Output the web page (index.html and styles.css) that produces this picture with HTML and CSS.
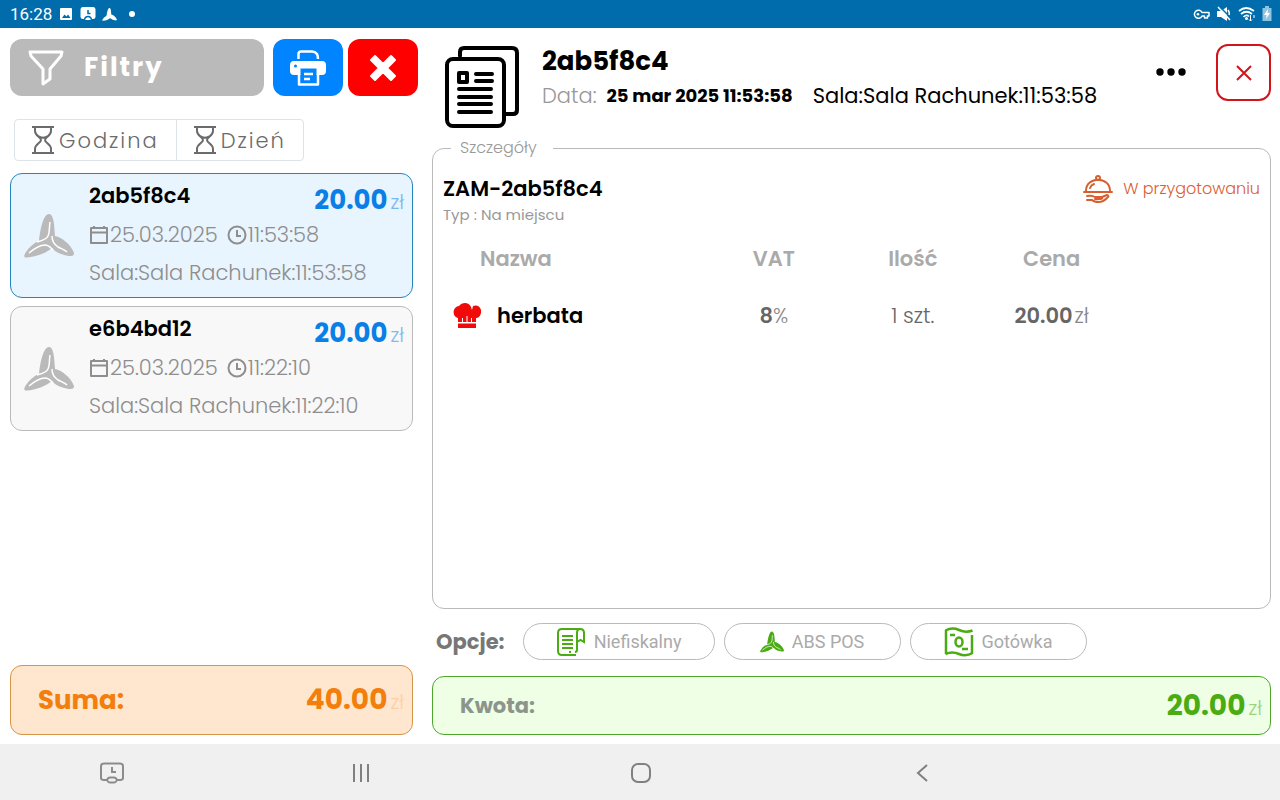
FILE: index.html
```html
<!DOCTYPE html>
<html lang="pl">
    <head>
        <meta charset="utf-8">
        <meta name="viewport" content="width=device-width, initial-scale=1">
        <title>Rachunki</title>
        <link rel="stylesheet" href="styles.css">
    </head>
    <body>
        <!-- shared icons -->
        <svg class="sprite" aria-hidden="true">
            <symbol id="logo" viewBox="0 0 50 44">
                <path d="M25 0C28 0 29.500 5 30 10L31 22C38 23 47 31 50 39C50 42 48 42 45 42C39 41 32 39 28 34C22 39 12 43 3 43.500C-1 43.500 0 41 2 38C5 33 10 29 15 27C16 17 19 0 25 0Z"/>
                <path class="vein" d="M26 8C25 14 26 18 24 22C22 26 17 27 13 28M28 22C28 28 31 31 34 33C38 35 41 36 43 38M5 39C11 34 16 31 21 31C25 31 26 33 29 36"/>
            </symbol>
            <symbol id="calendar" viewBox="0 0 20 20">
                <path d="M2 3H18V18H2ZM2 7.500H18M5 1V3M15 1V3" fill="none" stroke="currentColor" stroke-width="2" stroke-linejoin="round"/>
            </symbol>
            <symbol id="clock" viewBox="0 0 20 20">
                <circle cx="10" cy="10" r="8.500" fill="none" stroke="currentColor" stroke-width="2"/>
                <path d="M10 5V11H14" fill="none" stroke="currentColor" stroke-width="2"/>
            </symbol>
            <symbol id="hourglass" viewBox="0 0 22 28">
                <path d="M0 1H22M0 27H22M3 1V5C3 10 9 11 9 14C9 17 3 18 3 23V27M19 1V5C19 10 13 11 13 14C13 17 19 18 19 23V27M6 10C9 12 13 12 16 10" fill="none" stroke="currentColor" stroke-width="2"/>
            </symbol>
        </svg>

        <header class="status-bar">
            <div class="status-group">
                <span class="status-time">16:28</span>
                <svg width="16" height="14" viewBox="0 0 16 14"><path fill="#fff" d="M3 1H13Q14 1 14 2V12Q14 13 13 13H3Q2 13 2 12V2Q2 1 3 1Z"/><path fill="#006cab" d="M4 11L6.500 7.500L8.500 9.500L10 7.500L12.500 11Z"/></svg>
                <svg width="16" height="14" viewBox="0 0 16 14"><path fill="#fff" d="M3 0H13Q15.500 0 15.500 3V10Q15.500 12 13 12H12V13H4V12H3Q.500 12 .500 10V3Q.500 0 3 0Z"/><path d="M8 3V6.500H10.500M4.500 13Q5 9.500 8 9.500T11.500 13" fill="none" stroke="#006cab" stroke-width="1.500"/></svg>
                <svg class="logo-status" width="15" height="13"><use href="#logo"/></svg>
                <svg width="14" height="14" viewBox="0 0 14 14"><circle cx="9" cy="7" r="3" fill="#fff"/></svg>
            </div>
            <div class="status-group">
                <svg width="17" height="14" viewBox="0 0 17 14"><path d="M9 5.500H16V9H14.500V11H11.500V9H9A4 4 0 1 1 9 5.500Z" fill="none" stroke="#fff" stroke-width="1.500" stroke-linejoin="round"/><circle cx="5" cy="7.300" r="1.300" fill="#fff"/></svg>
                <svg width="16" height="16" viewBox="0 0 16 16"><path d="M1 5H5L11 1V15L5 11H1Z" fill="#fff"/><path d="M4 1L15 12" stroke="#006cab" stroke-width="1.500"/><path d="M2 1L14 14M12 4Q14 7 13 9" stroke="#fff" stroke-width="1.500" fill="none"/></svg>
                <svg width="18" height="16" viewBox="0 0 18 16"><path d="M1 5Q8 -1 16 5M3 8Q8.500 3.500 14 8M5.500 11Q8.500 8 11 10.500" fill="none" stroke="#fff" stroke-width="1.700"/><circle cx="8.500" cy="12.500" r="1.500" fill="#fff"/><path d="M12.500 9V15M11 13.500L12.500 15L14 13.500M16 12V9" stroke="#fff" fill="none"/></svg>
                <svg width="10" height="16" viewBox="0 0 10 16"><path d="M3 0H7V2H9.500V15H.500V2H3Z" fill="#8fc3e0"/><path d="M6 3L2 9H4.500L4 13L8 7H5.500Z" fill="#fff"/></svg>
            </div>
        </header>

        <main class="app">
            <aside class="orders">
                <div class="toolbar">
                    <button class="btn btn-filter">
                        <svg width="36" height="36" viewBox="0 0 36 36"><path d="M2 2H34L33 6L22 19V29L15 34V19L3 6Z" fill="none" stroke="#fff" stroke-width="3" stroke-linejoin="round"/></svg>
                        Filtry
                    </button>
                    <button class="btn btn-print" aria-label="Drukuj">
                        <svg width="36" height="36" viewBox="0 0 36 36">
                            <path d="M8.500 9V4Q8.500 1.500 11 1.500H22Q25 1.500 27 4Q28 6 28 9" fill="none" stroke="#fff" stroke-width="2.500"/>
                            <path d="M4 11H32Q36 11 36 15V21Q36 25 32 25H4Q0 25 0 21V15Q0 11 4 11Z" fill="#fff"/>
                            <circle cx="5.500" cy="16" r="1.500" fill="#0084ff"/>
                            <path d="M10.500 18.500H26.500V34.500H10.500Z" fill="#0084ff"/>
                            <path d="M9 24V34.500H28V24M14 24H23M14 29H20" fill="none" stroke="#fff" stroke-width="2.500" stroke-linejoin="round"/>
                        </svg>
                    </button>
                    <button class="btn btn-clear" aria-label="Wyczyść">
                        <svg width="28" height="28" viewBox="0 0 28 28"><path d="M6 2L14 10L22 2L26 6L18 14L26 22L22 26L14 18L6 26L2 22L10 14L2 6Z" fill="#fff" stroke="#fff" stroke-width="2" stroke-linejoin="round"/></svg>
                    </button>
                </div>

                <div class="segment">
                    <button class="segment-item"><svg width="22" height="28"><use href="#hourglass"/></svg>Godzina</button>
                    <button class="segment-item"><svg width="22" height="28"><use href="#hourglass"/></svg>Dzień</button>
                </div>

                <div class="order-list">
                    <article class="order order-active">
                        <svg class="order-logo" width="50" height="44"><use href="#logo"/></svg>
                        <div class="order-info">
                            <div class="order-top">
                                <h3>2ab5f8c4</h3>
                                <div class="price">20.00<span>zł</span></div>
                            </div>
                            <div class="order-date">
                                <svg width="20" height="20"><use href="#calendar"/></svg><span>25.03.2025</span>
                                <svg class="clock" width="20" height="20"><use href="#clock"/></svg><span>11:53:58</span>
                            </div>
                            <p>Sala:Sala Rachunek:11:53:58</p>
                        </div>
                    </article>
                    <article class="order">
                        <svg class="order-logo" width="50" height="44"><use href="#logo"/></svg>
                        <div class="order-info">
                            <div class="order-top">
                                <h3>e6b4bd12</h3>
                                <div class="price">20.00<span>zł</span></div>
                            </div>
                            <div class="order-date">
                                <svg width="20" height="20"><use href="#calendar"/></svg><span>25.03.2025</span>
                                <svg class="clock" width="20" height="20"><use href="#clock"/></svg><span>11:22:10</span>
                            </div>
                            <p>Sala:Sala Rachunek:11:22:10</p>
                        </div>
                    </article>
                </div>

                <div class="sum">
                    <span class="sum-label">Suma:</span>
                    <div class="price">40.00<span>zł</span></div>
                </div>
            </aside>

            <section class="details">
                <div class="details-head">
                    <svg width="76" height="84" viewBox="0 0 76 84">
                        <g fill="none" stroke="#000" stroke-width="4" stroke-linecap="round" stroke-linejoin="round">
                            <path d="M16 12V8Q16 4 20 4H68Q73 4 73 9V66Q73 70 69 70H61"/>
                            <rect x="3" y="15" width="57" height="67" rx="6"/>
                            <path d="M32 30H48M32 37H48M15 45H47M15 53H47M15 60H47M15 68H47"/>
                            <path d="M15 29H23V38H15Z"/>
                        </g>
                    </svg>
                    <div class="details-title">
                        <h1>2ab5f8c4</h1>
                        <div class="details-meta">
                            <span class="meta-label">Data:</span>
                            <strong>25 mar 2025 11:53:58</strong>
                            <span class="meta-place">Sala:Sala Rachunek:11:53:58</span>
                        </div>
                    </div>
                    <button class="more" aria-label="Więcej">
                        <svg width="30" height="8" viewBox="0 0 30 8"><circle cx="4" cy="4" r="3.700"/><circle cx="15" cy="4" r="3.700"/><circle cx="26" cy="4" r="3.700"/></svg>
                    </button>
                    <button class="close" aria-label="Zamknij">
                        <svg width="16" height="16" viewBox="0 0 16 16"><path d="M1 1L15 15M15 1L1 15" stroke="#d3141b" stroke-width="2"/></svg>
                    </button>
                </div>

                <fieldset class="box">
                    <legend>Szczegóły</legend>
                    <div class="box-head">
                        <div>
                            <h2>ZAM-2ab5f8c4</h2>
                            <p>Typ : Na miejscu</p>
                        </div>
                        <div class="state">
                            <svg width="30" height="28" viewBox="0 0 30 28">
                                <g fill="none" stroke="#d8602f" stroke-width="2" stroke-linecap="round" stroke-linejoin="round">
                                    <circle cx="15" cy="3" r="2"/>
                                    <path d="M3 16C3 1 27 1 27 16M1 17H29M7 13Q8 10 11 9M4 21Q9 20 12 22H19Q20 24 17 24H12M19 22L24 20Q27 21 24 23Q20 27 16 27Q11 27 9 25H4"/>
                                </g>
                            </svg>
                            <span>W przygotowaniu</span>
                        </div>
                    </div>

                    <table>
                        <thead>
                            <tr>
                                <th class="col-name">Nazwa</th>
                                <th>VAT</th>
                                <th>Ilość</th>
                                <th>Cena</th>
                                <td></td>
                            </tr>
                        </thead>
                        <tbody>
                            <tr>
                                <td>
                                    <div class="item-name">
                                        <svg width="28" height="26" viewBox="0 0 28 26"><path d="M5 19V15C-1 14-1 4 6 3C9-1 16-1 18 4L19 7L20 3C25 1 29 5 28 10C27 14 25 15 23 15V19H19V15H18V19H14.500V13H13.500V19H10V15H9V19ZM5 20.500H23V25H5Z" fill="#f00a0a"/></svg>
                                        herbata
                                    </div>
                                </td>
                                <td><b>8</b><span class="unit">%</span></td>
                                <td>1 szt.</td>
                                <td><b>20.00</b><span class="unit unit-zl">zł</span></td>
                                <td></td>
                            </tr>
                        </tbody>
                    </table>
                </fieldset>

                <div class="options">
                    <span class="options-label">Opcje:</span>
                    <button class="option option-wide">
                        <svg width="30" height="30" viewBox="0 0 30 30"><path d="M24 2H6Q2 2 2 6V24Q2 28 6 28H20M24 2Q21 2 21 6V23Q21 25 19 25M24 2Q28 2 28 6V15L24.500 13L21 15M6 9H17M6 13H17M6 17H17M6 21H17M13 25H15" fill="none" stroke="#4aab12" stroke-width="2"/></svg>
                        Niefiskalny
                    </button>
                    <button class="option">
                        <svg class="logo-green" width="24" height="22"><use href="#logo"/></svg>
                        ABS POS
                    </button>
                    <button class="option">
                        <svg width="30" height="30" viewBox="0 0 30 30"><path d="M1.500 3.500Q8 0 15 3T28.500 3.500M1.500 27Q8 24 15 27T28.500 26M2 3V27M28 8V27M6 8H11M18 22H24" fill="none" stroke="#4aab12" stroke-width="2.500"/><ellipse cx="15" cy="15" rx="3.500" ry="4.500" fill="none" stroke="#4aab12" stroke-width="2.500"/></svg>
                        Gotówka
                    </button>
                </div>

                <div class="amount">
                    <span class="amount-label">Kwota:</span>
                    <div class="price">20.00<span>zł</span></div>
                </div>
            </section>
        </main>

        <nav class="nav-bar">
            <button aria-label="Zrzut ekranu"><svg width="24" height="22" viewBox="0 0 24 22"><path d="M7 18H4Q1 18 1 16V4Q1 1.500 4 1.500H20Q23 1.500 23 4V16Q23 18 20 18H17M12 5V10H16M7 18Q8 15.500 10 15.500H14Q16 15.500 17 18Q16 20.500 14 20.500H10Q8 20.500 7 18Z" fill="none" stroke="#8c8c8c" stroke-width="2"/></svg></button>
            <button aria-label="Ostatnie"><svg width="18" height="18" viewBox="0 0 18 18"><path d="M2 0V18M9 0V18M16 0V18" stroke="#808080" stroke-width="2"/></svg></button>
            <button aria-label="Ekran główny"><svg width="20" height="20" viewBox="0 0 20 20"><rect x="1" y="1" width="18" height="18" rx="6" fill="none" stroke="#808080" stroke-width="2"/></svg></button>
            <button aria-label="Wstecz"><svg width="12" height="18" viewBox="0 0 12 18"><path d="M11 1L2 9L11 17" fill="none" stroke="#808080" stroke-width="2"/></svg></button>
        </nav>
    </body>
</html>
```
FILE: styles.css
```css
* {
    box-sizing: border-box;
}
body {
    margin: 0;
    min-height: 100vh;
    display: flex;
    flex-direction: column;
    background: #fff;
    font-family: Poppins, Inter, sans-serif;
    color: #000;
}
h1, h2, h3, p {
    margin: 0;
}
button {
    font-family: inherit;
    background: none;
    border: 0;
    padding: 0;
    cursor: pointer;
}
svg {
    display: block;
    flex-shrink: 0;
}
.sprite {
    display: none;
}
.vein {
    fill: none;
    stroke: #fff;
    stroke-width: 1.5;
}

/* android bars */
.status-bar {
    height: 28px;
    padding: 0 8px 0 10px;
    display: flex;
    align-items: center;
    justify-content: space-between;
    background: #006cab;
    color: #fff;
}
.status-group {
    display: flex;
    align-items: center;
    gap: 6px;
}
.status-time {
    font: 17px Roboto, sans-serif;
}
.logo-status {
    fill: #fff;
}
.nav-bar {
    height: 56px;
    display: grid;
    grid-template-columns: 17% 22% 22% 22%;
    place-items: center;
    padding: 2px 0 0 3px;
    background: #f0f0f0;
}

.app {
    flex: 1;
    display: grid;
    grid-template-columns: 408px 1fr;
    gap: 14px;
    padding: 0 9px 9px 10px;
}

/* left side */
.orders {
    display: flex;
    flex-direction: column;
    padding-top: 11px;
}
.toolbar {
    display: flex;
    gap: 5px;
}
.btn {
    width: 70px;
    height: 57px;
    border-radius: 12px;
    display: flex;
    align-items: center;
    justify-content: center;
}
.btn-filter {
    flex: 1;
    justify-content: flex-start;
    gap: 20px;
    padding-left: 18px;
    margin-right: 4px;
    background: #bababa;
    color: #fff;
    font-size: 26px;
    font-weight: 700;
    letter-spacing: 2px;
}
.btn-print {
    background: #0084ff;
}
.btn-clear {
    background: #f00;
}
.segment {
    align-self: flex-start;
    display: flex;
    margin: 23px 0 12px 4px;
    border: 1px solid #dde3e6;
    border-radius: 4px;
}
.segment-item {
    height: 40px;
    padding: 0 17px;
    display: flex;
    align-items: center;
    gap: 5px;
    color: #6b6b6b;
    font-size: 21px;
    font-weight: 300;
    letter-spacing: 2px;
}
.segment-item + .segment-item {
    border-left: 1px solid #dde3e6;
}
.order-list {
    flex: 1;
    display: flex;
    flex-direction: column;
    gap: 8px;
    margin-right: 5px;
}
.order {
    display: flex;
    align-items: center;
    gap: 15px;
    height: 125px;
    padding: 0 8px 0 13px;
    background: #f8f8f8;
    border: 1px solid #bababa;
    border-radius: 12px;
    color: #8e8e8e;
}
.order-active {
    background: #e8f4fe;
    border-color: #2585bd;
}
.order-logo {
    fill: #bababa;
}
.order-info {
    flex: 1;
    font-size: 21px;
    font-weight: 300;
}
.order-top {
    display: flex;
    justify-content: space-between;
    height: 42px;
}
.order h3 {
    color: #000;
    font-size: 21px;
    font-weight: 600;
    line-height: 38px;
}
.order .price {
    line-height: 46px;
}
.order-date {
    display: flex;
    align-items: center;
    gap: 1px;
    line-height: 32px;
}
.clock {
    margin-left: 8px;
}
.order p {
    line-height: 44px;
}
.price {
    color: #0a7fe6;
    font-size: 26px;
    font-weight: 700;
    white-space: nowrap;
}
.price span {
    margin-left: 3px;
    font-size: 20px;
    font-weight: 300;
    opacity: 0.5;
}
.sum, .amount {
    display: flex;
    align-items: center;
    justify-content: space-between;
    border: 1px solid;
    border-radius: 12px;
}
.sum {
    height: 70px;
    margin-right: 5px;
    padding: 0 8px 0 27px;
    background: #ffe6cf;
    border-color: #d69548;
}
.sum-label, .sum .price {
    color: #f27e0c;
    font-weight: 700;
}
.sum-label {
    font-size: 26px;
}
.sum .price {
    font-size: 28px;
}
.sum .price span {
    opacity: 0.2;
}

/* right side */
.details {
    display: flex;
    flex-direction: column;
    min-width: 0;
}
.details-head {
    display: flex;
    align-items: flex-start;
    height: 110px;
    padding: 16px 0 0 12px;
}
.details-title {
    flex: 1;
    padding-left: 22px;
}
h1 {
    font-size: 26px;
    line-height: 34px;
}
.details-meta {
    display: flex;
    align-items: center;
    line-height: 36px;
    font-size: 21px;
    white-space: nowrap;
}
.details-meta strong {
    font-size: 18px;
    padding: 0 20px 0 10px;
}
.meta-label {
    color: #999;
    font-weight: 300;
}
.more {
    margin: 24px 30px 0 0;
}
.close {
    width: 55px;
    height: 57px;
    display: flex;
    align-items: center;
    justify-content: center;
    border: 2px solid #d3141b;
    border-radius: 12px;
}
.box {
    flex: 1;
    min-width: 0;
    margin: 0;
    padding: 16px 10px;
    border: 1px solid #bababa;
    border-radius: 12px;
}
.box legend {
    margin-left: 8px;
    padding: 0 16px 0 9px;
    color: #999;
    font-size: 16px;
    font-weight: 300;
    line-height: 20px;
}
.box-head {
    display: flex;
    justify-content: space-between;
    align-items: flex-start;
}
h2 {
    font-size: 21px;
    font-weight: 600;
    line-height: 30px;
}
.box-head p {
    color: #999;
    font-size: 15px;
    line-height: 22px;
}
.state {
    display: flex;
    align-items: center;
    gap: 10px;
    color: #d8602f;
    font-size: 16px;
    font-weight: 300;
    line-height: 30px;
}
table {
    width: 100%;
    margin-top: 4px;
    table-layout: fixed;
    border-collapse: collapse;
    font-size: 21px;
    text-align: center;
}
th, td {
    width: 17%;
    height: 57px;
    padding: 0;
    color: #666;
    font-weight: 300;
}
th {
    color: #aaa;
    font-weight: 600;
}
.col-name {
    width: 32%;
    padding-left: 37px;
    text-align: left;
}
.item-name {
    display: flex;
    align-items: center;
    gap: 16px;
    padding-left: 10px;
    color: #000;
    font-weight: 600;
}
td b {
    font-weight: 600;
}
.unit {
    color: #888;
}
.unit-zl {
    margin-left: 2px;
}
.options {
    display: flex;
    align-items: center;
    gap: 9px;
    padding: 14px 0 16px 4px;
}
.options-label {
    margin-right: 9px;
    color: #777;
    font-size: 21px;
    font-weight: 700;
}
.option {
    display: flex;
    align-items: center;
    justify-content: center;
    gap: 8px;
    width: 177px;
    height: 37px;
    border: 1px solid #bababa;
    border-radius: 19px;
    color: #aaa;
    font: 18px Roboto, sans-serif;
}
.option-wide {
    width: 192px;
}
.logo-green {
    fill: #4aab12;
}
.amount {
    height: 59px;
    padding: 0 8px 0 27px;
    background: #eeffe6;
    border-color: #4da52c;
}
.amount-label {
    color: #8b958b;
    font-size: 21px;
    font-weight: 700;
}
.amount .price {
    color: #4aab12;
    font-size: 28px;
}
```
